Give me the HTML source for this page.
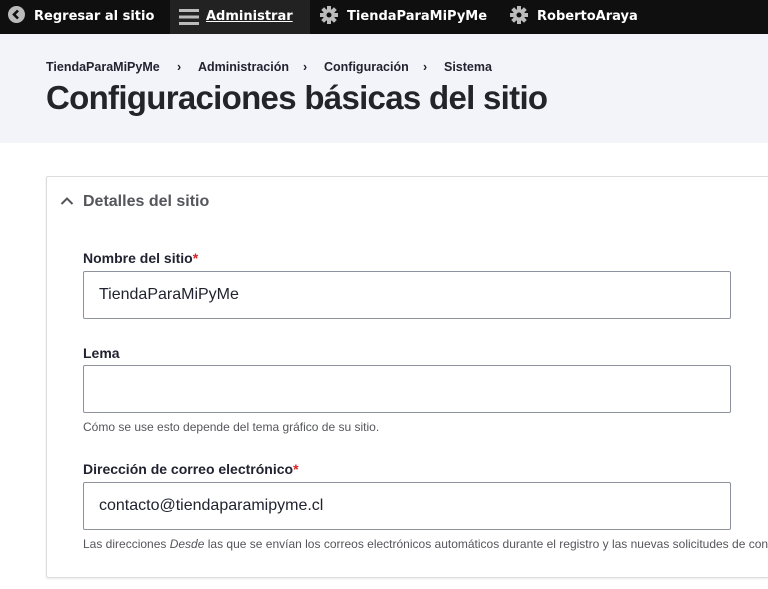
<!DOCTYPE html>
<html><head><meta charset="utf-8"><style>
*{margin:0;padding:0;box-sizing:border-box}
html,body{width:768px;height:589px;overflow:hidden}
body{background:#fff;font-family:"Liberation Sans","DejaVu Sans",sans-serif;color:#222330;position:relative}
.tb{position:absolute;left:0;top:0;width:768px;height:34px;background:#0f0f0f;font-family:"DejaVu Sans",sans-serif;font-weight:bold;font-size:13px;color:#fff;overflow:hidden}
.tb div{position:absolute;top:0;height:34px;line-height:33px;white-space:nowrap}
.adm{left:170px;width:140px;background:#222;}
.hdr{position:absolute;left:0;top:34px;width:768px;height:109px;background:#f3f4f9}
.bc{position:absolute;top:60px;font-size:12.5px;font-weight:bold;color:#222330}
h1{position:absolute;left:46px;top:79px;font-size:33px;font-weight:bold;letter-spacing:-0.7px;color:#232429;white-space:nowrap}
.card{position:absolute;left:46px;top:176px;width:722px;height:402px;border:1px solid #dcdcdf;border-right:none;border-radius:2px 0 0 2px;box-shadow:0 1px 2px rgba(0,0,0,.08)}
.sum{position:absolute;left:83px;top:193px;font-size:16px;font-weight:bold;color:#55565b}
.lbl{position:absolute;left:83px;font-size:14px;font-weight:bold;color:#222330}
.lbl span{color:#d72222}
.inp{position:absolute;left:83px;width:648px;height:48px;border:1px solid #8e929c;border-radius:2px;font-size:16px;padding:14px 15px;color:#222330}
.desc{position:absolute;left:83px;font-size:12px;color:#55565b;white-space:nowrap;width:685px;overflow:hidden}
</style></head><body>
<div class="tb">
<div style="left:8px"><svg width="17" height="17" viewBox="0 0 17 17" style="vertical-align:-3px"><circle cx="8.5" cy="8.5" r="8.5" fill="#bbb"/><path d="M10 4.5L6 8.5L10 12.5" stroke="#0f0f0f" stroke-width="2.6" fill="none"/></svg>&nbsp; Regresar al sitio</div>
<div class="adm"><svg width="20" height="16" viewBox="0 0 20 16" style="position:absolute;left:9px;top:9px"><rect y="0" width="20" height="3" fill="#bbb"/><rect y="6.5" width="20" height="3" fill="#bbb"/><rect y="13" width="20" height="3" fill="#bbb"/></svg><span style="position:absolute;left:36px;text-decoration:underline">Administrar</span></div>
<div style="left:320px"><svg width="18" height="18" viewBox="0 0 18 18" style="vertical-align:-4px"><g fill="#bbb"><circle cx="9" cy="9" r="6"/><rect x="7" y="0" width="4" height="18"/><rect x="0" y="7" width="18" height="4"/><rect x="7" y="0" width="4" height="18" transform="rotate(45 9 9)"/><rect x="7" y="0" width="4" height="18" transform="rotate(-45 9 9)"/></g><circle cx="9" cy="9" r="2.5" fill="#0f0f0f"/></svg>&nbsp; TiendaParaMiPyMe</div>
<div style="left:510px"><svg width="18" height="18" viewBox="0 0 18 18" style="vertical-align:-4px"><g fill="#bbb"><circle cx="9" cy="9" r="6"/><rect x="7" y="0" width="4" height="18"/><rect x="0" y="7" width="18" height="4"/><rect x="7" y="0" width="4" height="18" transform="rotate(45 9 9)"/><rect x="7" y="0" width="4" height="18" transform="rotate(-45 9 9)"/></g><circle cx="9" cy="9" r="2.5" fill="#0f0f0f"/></svg>&nbsp; RobertoAraya</div>
</div>
<div class="hdr"></div>
<div class="bc" style="left:46px">TiendaParaMiPyMe</div>
<div class="bc" style="left:177px">›</div>
<div class="bc" style="left:198px">Administración</div>
<div class="bc" style="left:303px">›</div>
<div class="bc" style="left:324px">Configuración</div>
<div class="bc" style="left:423px">›</div>
<div class="bc" style="left:444px">Sistema</div>
<h1>Configuraciones básicas del sitio</h1>
<div class="card"></div>
<svg width="14" height="10" viewBox="0 0 14 10" style="position:absolute;left:60px;top:196px"><path d="M1.5 8L7 2.5L12.5 8" stroke="#55565b" stroke-width="2" fill="none"/></svg>
<div class="sum">Detalles del sitio</div>
<div class="lbl" style="top:250px">Nombre del sitio<span>*</span></div>
<div class="inp" style="top:271px">TiendaParaMiPyMe</div>
<div class="lbl" style="top:345px">Lema</div>
<div class="inp" style="top:365px"></div>
<div class="desc" style="top:420px">Cómo se use esto depende del tema gráfico de su sitio.</div>
<div class="lbl" style="top:461px">Dirección de correo electrónico<span>*</span></div>
<div class="inp" style="top:482px">contacto@tiendaparamipyme.cl</div>
<div class="desc" style="top:537px">Las direcciones <i>Desde</i> las que se envían los correos electrónicos automáticos durante el registro y las nuevas solicitudes de contraseña</div>
</body></html>
